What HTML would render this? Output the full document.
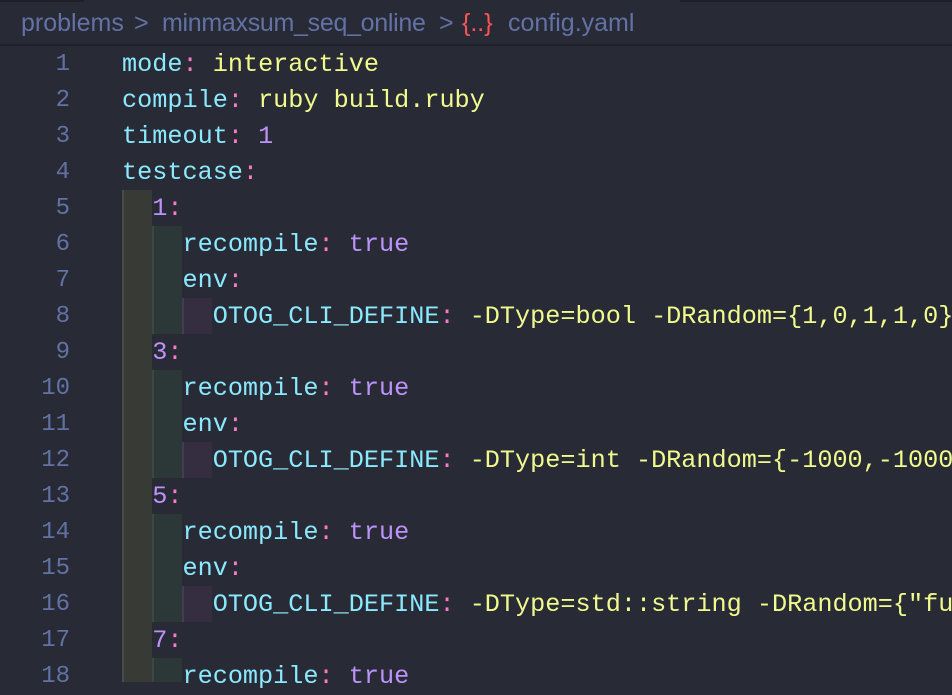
<!DOCTYPE html>
<html><head><style>
html,body{margin:0;padding:0;width:952px;height:682px;overflow:hidden;background:#282a36;}
#bc{position:absolute;left:0;top:0;width:952px;height:44px;background:#282a36;border-bottom:2px solid #1f2029;font-family:"Liberation Sans",sans-serif;font-size:25px;color:#6272a4;}
#bc span{position:absolute;top:9px;white-space:pre;}
.ln{position:absolute;width:70px;text-align:right;left:0;font-family:"Liberation Mono",monospace;font-size:24px;color:#6272a4;line-height:36px;}
.l{position:absolute;left:122px;font-family:"Liberation Mono",monospace;font-size:25.2px;line-height:36px;white-space:pre;color:#f8f8f2;}
.k{color:#8be9fd}.p{color:#ff79c6}.s{color:#f1fa8c}.n{color:#bd93f9}
.g{position:absolute;}
</style></head><body>
<div id="bc"><span style="left:21px">problems</span><span style="left:134px;">&gt;</span><span style="left:162px;letter-spacing:-0.3px">minmaxsum_seq_online</span><span style="left:439px">&gt;</span><span style="left:462px;color:#ff5555">{..}</span><span style="left:508px">config.yaml</span></div>
<div style="position:absolute;left:0;top:0;width:84px;height:2px;background:#1e1f28"></div>
<div style="position:absolute;left:680px;top:0;width:272px;height:2px;background:#1e1f28"></div>

<div class="g" style="left:122px;top:190px;width:30px;height:492px;background:#383a36;border-left:2px solid #4a4c47;box-sizing:border-box"></div>
<div class="g" style="left:152px;top:226px;width:30px;height:108px;background:#2c3838;border-left:2px solid #3b4848;box-sizing:border-box"></div>
<div class="g" style="left:152px;top:370px;width:30px;height:108px;background:#2c3838;border-left:2px solid #3b4848;box-sizing:border-box"></div>
<div class="g" style="left:152px;top:514px;width:30px;height:108px;background:#2c3838;border-left:2px solid #3b4848;box-sizing:border-box"></div>
<div class="g" style="left:152px;top:658px;width:30px;height:24px;background:#2c3838;border-left:2px solid #3b4848;box-sizing:border-box"></div>
<div class="g" style="left:182px;top:298px;width:30px;height:36px;background:#342e40;border-left:2px solid #443c50;box-sizing:border-box"></div>
<div class="g" style="left:182px;top:442px;width:30px;height:36px;background:#342e40;border-left:2px solid #443c50;box-sizing:border-box"></div>
<div class="g" style="left:182px;top:586px;width:30px;height:36px;background:#342e40;border-left:2px solid #443c50;box-sizing:border-box"></div>

<div class="ln" style="top:47px">1</div><div class="l" style="top:47px"><span class="k">mode</span><span class="p">:</span> <span class="s">interactive</span></div>
<div class="ln" style="top:83px">2</div><div class="l" style="top:83px"><span class="k">compile</span><span class="p">:</span> <span class="s">ruby build.ruby</span></div>
<div class="ln" style="top:119px">3</div><div class="l" style="top:119px"><span class="k">timeout</span><span class="p">:</span> <span class="n">1</span></div>
<div class="ln" style="top:155px">4</div><div class="l" style="top:155px"><span class="k">testcase</span><span class="p">:</span></div>
<div class="ln" style="top:191px">5</div><div class="l" style="top:191px">  <span class="n">1</span><span class="p">:</span></div>
<div class="ln" style="top:227px">6</div><div class="l" style="top:227px">    <span class="k">recompile</span><span class="p">:</span> <span class="n">true</span></div>
<div class="ln" style="top:263px">7</div><div class="l" style="top:263px">    <span class="k">env</span><span class="p">:</span></div>
<div class="ln" style="top:299px">8</div><div class="l" style="top:299px">      <span class="k">OTOG_CLI_DEFINE</span><span class="p">:</span> <span class="s">-DType=bool -DRandom={1,0,1,1,0}</span></div>
<div class="ln" style="top:335px">9</div><div class="l" style="top:335px">  <span class="n">3</span><span class="p">:</span></div>
<div class="ln" style="top:371px">10</div><div class="l" style="top:371px">    <span class="k">recompile</span><span class="p">:</span> <span class="n">true</span></div>
<div class="ln" style="top:407px">11</div><div class="l" style="top:407px">    <span class="k">env</span><span class="p">:</span></div>
<div class="ln" style="top:443px">12</div><div class="l" style="top:443px">      <span class="k">OTOG_CLI_DEFINE</span><span class="p">:</span> <span class="s">-DType=int -DRandom={-1000,-1000</span></div>
<div class="ln" style="top:479px">13</div><div class="l" style="top:479px">  <span class="n">5</span><span class="p">:</span></div>
<div class="ln" style="top:515px">14</div><div class="l" style="top:515px">    <span class="k">recompile</span><span class="p">:</span> <span class="n">true</span></div>
<div class="ln" style="top:551px">15</div><div class="l" style="top:551px">    <span class="k">env</span><span class="p">:</span></div>
<div class="ln" style="top:587px">16</div><div class="l" style="top:587px">      <span class="k">OTOG_CLI_DEFINE</span><span class="p">:</span> <span class="s">-DType=std::string -DRandom={"fu</span></div>
<div class="ln" style="top:623px">17</div><div class="l" style="top:623px">  <span class="n">7</span><span class="p">:</span></div>
<div class="ln" style="top:659px">18</div><div class="l" style="top:659px">    <span class="k">recompile</span><span class="p">:</span> <span class="n">true</span></div>
</body></html>
